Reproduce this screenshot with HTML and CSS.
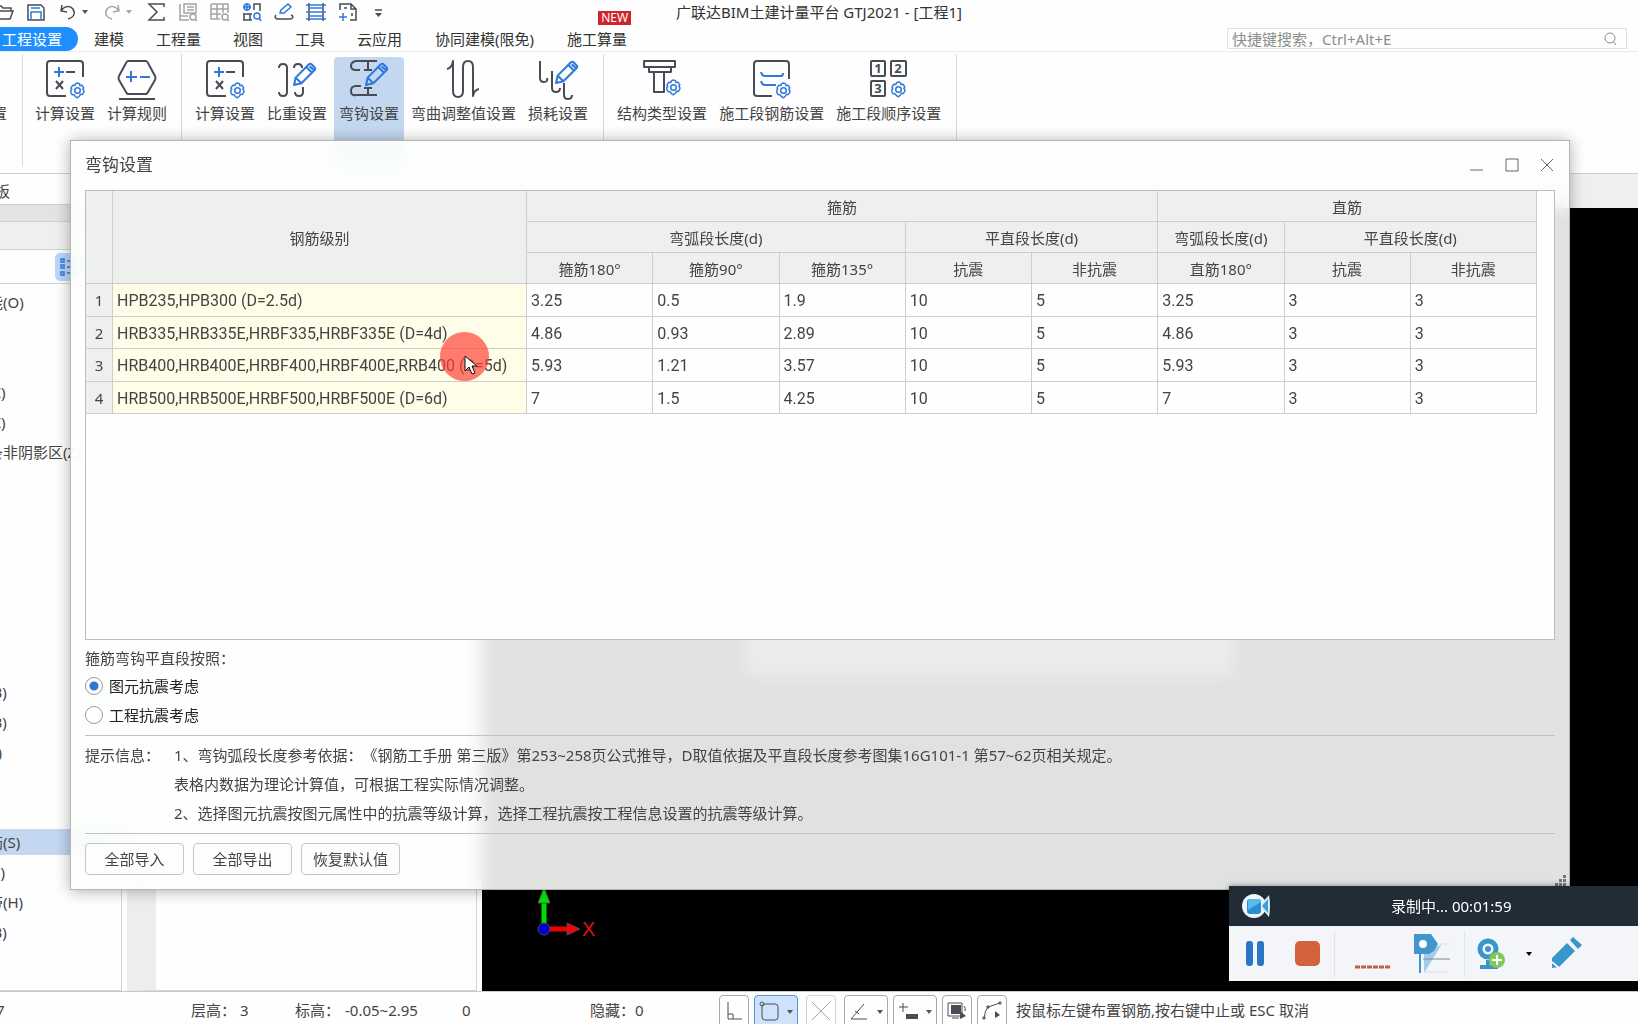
FILE: index.html
```html
<!DOCTYPE html>
<html lang="zh-CN">
<head>
<meta charset="utf-8">
<title>广联达BIM土建计量平台 GTJ2021 - [工程1]</title>
<link rel="stylesheet" href="styles.css">
</head>
<body>
<svg class="defs" aria-hidden="true">
  <symbol id="gear" viewBox="0 0 16 16"><path d="M6.3 1.5 8 1l1.700.5.6 1.700 1.900-.2 1.700 2.500-.9 1.500L14 8l-.1 1.800-1.300 1.900-1.900-.1-1 1.800L8 14.800l-2-1-1-1.800-1.900.1-1.300-1.900L1.700 8l.9-1-.7-1.500 1.700-2.500 1.900.2z"/><circle cx="8" cy="8" r="2.600"/></symbol>
  <symbol id="pencil" viewBox="0 0 24 24"><path d="M2 22 3.500 15 16 2.500q1.500-1.500 3 0l2.500 2.500q1.500 1.500 0 3L9 20.500zM14 5l5 5M17 4l4 4M3.500 15l5.500 5.500"/></symbol>
</svg>
<div class="app">
  <header class="titlebar">
    <nav class="quick" aria-label="快速访问">
      <button class="qbtn"><svg viewBox="0 0 20 20"><path d="M1 16V4h6l2 2h8v3M1 17h15l3-8H5l-3 8"/></svg></button>
      <button class="qbtn"><svg viewBox="0 0 20 20"><path d="M2 3h13l3 3v12H2z"/><path class="b" d="M5 18v-8h10v8M5 6h9"/></svg></button>
      <button class="qbtn split"><svg viewBox="0 0 20 20"><path d="M4 3 3 9l6 1M3 9c3-5 9-6 12-2 3 5 0 9-5 10"/></svg><i class="caret"></i></button>
      <button class="qbtn split off"><svg viewBox="0 0 20 20"><path d="m16 3 1 6-6 1M17 9C14 4 8 3 5 7c-3 5 0 9 5 10"/></svg><i class="caret"></i></button>
      <button class="qbtn"><svg viewBox="0 0 20 20"><path d="M18 5V2H3l8 8-8 8h15v-3"/></svg></button>
      <button class="qbtn off"><svg viewBox="0 0 20 20"><path d="M2 2v16h9M6 2h12v9H6zM9 5h7M9 8h7M2 14h8"/><circle cx="15" cy="15" r="3"/><path d="m17 17 2 2"/></svg></button>
      <button class="qbtn off"><svg viewBox="0 0 20 20"><path d="M1 2h17v9M1 2v15h9M1 7h17M1 12h10M7 2v15M13 2v9"/><circle cx="15" cy="15" r="3"/><path d="m17 17 2 2"/></svg></button>
      <button class="qbtn"><svg viewBox="0 0 20 20"><circle class="b" cx="5" cy="5" r="3"/><path class="b" d="M5 1v8M1 5h8"/><path d="M12 8V2h6v7M2 18v-6h6v6M1 12h9M1 18h9"/><circle class="b" cx="15" cy="14" r="3"/><path class="b" d="m17 16 2 3"/></svg></button>
      <button class="qbtn"><svg viewBox="0 0 20 20"><path class="b" d="m6 11 1-3 7-6 3 3-7 6z"/><path d="M2 13c-2 2 0 4 2 4h12c3 0 4-3 1-4"/></svg></button>
      <button class="qbtn"><svg viewBox="0 0 20 20"><path d="M3 1v18M17 1v18"/><path class="b" d="M0 3h20M0 10h20M0 17h20M3 6h14M3 14h14"/></svg></button>
      <button class="qbtn"><svg viewBox="0 0 20 20"><path d="M2 8V2h11l5 5v11h-6M13 2v5h5M6 6h3M14 11v3"/><path class="b" d="M1 15h8M5 11v8"/></svg></button>
      <button class="qbtn"><svg viewBox="0 0 20 20"><path d="M5 8h7"/><path class="fill" d="M5 11h7l-3.500 4z"/></svg></button>
    </nav>
    <h1 class="apptitle">广联达BIM土建计量平台 GTJ2021 - [工程1]</h1>
  </header>

  <div class="tabrow">
    <nav class="tabs">
      <a href="#" class="tab current">工程设置</a>
      <a href="#" class="tab">建模</a>
      <a href="#" class="tab">工程量</a>
      <a href="#" class="tab">视图</a>
      <a href="#" class="tab">工具</a>
      <a href="#" class="tab">云应用</a>
      <a href="#" class="tab long">协同建模(限免)</a>
      <a href="#" class="tab">施工算量<span class="new">NEW</span></a>
    </nav>
    <div class="search">
      <input type="text" aria-label="快捷键搜索" placeholder="快捷键搜索，Ctrl+Alt+E">
      <svg viewBox="0 0 16 16"><circle cx="8" cy="7" r="5"/><path d="m11 10 3 4"/></svg>
    </div>
  </div>

  <div class="ribbon">
    <div class="group cut"><button class="tool"><span>置</span></button></div>
    <div class="group">
      <button class="tool"><svg viewBox="0 0 38 38"><path d="M20 36H4q-3 0-3-3V4q0-3 3-3h30q3 0 3 3v13M20 12h9M10 21l7 8M17 21l-7 8"/><path class="b" d="M8 12h10M13 7v10"/><use class="g" href="#gear" x="23" y="22" width="17" height="17"/></svg><span>计算设置</span></button>
      <button class="tool"><svg viewBox="0 0 38 38"><path d="M10 1h18q1 0 2 2l7 13q1 2 0 4l-7 12q-1 2-2 2H10q-1 0-2-2L1 20q-1-2 0-4L8 3q1-2 2-2zM1 39h36"/><path class="b" d="M8 17h11M13 11v11M22 17h10"/></svg><span>计算规则</span></button>
    </div>
    <div class="group">
      <button class="tool"><svg viewBox="0 0 38 38"><path d="M20 36H4q-3 0-3-3V4q0-3 3-3h30q3 0 3 3v13M20 12h9M10 21l7 8M17 21l-7 8"/><path class="b" d="M8 12h10M13 7v10"/><use class="g" href="#gear" x="23" y="22" width="17" height="17"/></svg><span>计算设置</span></button>
      <button class="tool"><svg viewBox="0 0 38 38"><path d="M1 8q0-4 4-4t4 4v24q0 4-4 4t-4-4M16 8q0-4 4-4t4 4M25 27v5q0 4-4 4t-4-4"/><use class="b" href="#pencil" x="14" y="2" width="25" height="25"/></svg><span>比重设置</span></button>
      <button class="tool on"><svg viewBox="0 0 38 38"><path d="M10 10H6q-5 0-5-4t5-5h21M18 1v10M14 10h8M11 26H6q-5 0-5 5t5 4h21M18 28v6M14 28h8"/><use class="b" href="#pencil" x="14" y="2" width="25" height="25"/></svg><span>弯钩设置</span></button>
      <button class="tool"><svg viewBox="0 0 38 38"><path d="M2 9q5-1 6-8v30q0 6 5 6t5-6V7q0-6 5-6t5 6v29q1-6 6-7"/></svg><span>弯曲调整值设置</span></button>
      <button class="tool"><svg viewBox="0 0 38 38"><path d="M1 1v17q0 4 4 4t3-4M13 11v17q0 4 4 4t4-4M25 23v12q0 4 4 4t4-4"/><use class="b" href="#pencil" x="15" y="0" width="25" height="25"/></svg><span>损耗设置</span></button>
    </div>
    <div class="group">
      <button class="tool"><svg viewBox="0 0 38 38"><path d="M1 1h31v6h-4v5H6V7H1zM6 7h22M11 12v20h10V12"/><use class="g" href="#gear" x="22" y="19" width="17" height="17"/></svg><span>结构类型设置</span></button>
      <button class="tool"><svg viewBox="0 0 38 38"><path d="M19 36H4q-3 0-3-3V4q0-3 3-3h29q3 0 3 3v15"/><path class="b" d="M8 12q1 4 4 4h16q2 0 2-3M8 21q1 4 4 4h11"/><use class="g" href="#gear" x="22" y="22" width="17" height="17"/></svg><span>施工段钢筋设置</span></button>
      <button class="tool"><svg viewBox="0 0 38 38"><path d="M2 1h12q1 0 1 1v13q0 1-1 1H2q-1 0-1-1V2q0-1 1-1zM22 1h13q1 0 1 1v13q0 1-1 1H22q-1 0-1-1V2q0-1 1-1zM2 21h12q1 0 1 1v13q0 1-1 1H2q-1 0-1-1V22q0-1 1-1z"/><text x="8" y="13">1</text><text x="28" y="13">2</text><text x="8" y="33">3</text><use class="g" href="#gear" x="20" y="21" width="17" height="17"/></svg><span>施工段顺序设置</span></button>
    </div>
  </div>

  <main class="work">
    <aside class="side">
      <div class="floorbar"><span>板</span></div>
      <div class="band"></div>
      <div class="panels">
        <section class="nav">
          <div class="navhead"></div>
          <div class="navtools"><button class="listbtn" aria-label="列表"><svg viewBox="0 0 18 18"><path d="M1 1h3v3H1zM1 7h3v3H1zM1 14h3v3H1zM7 3h10M7 9h10M7 15h10"/></svg></button></div>
          <ul class="tree">
            <li>能(O)</li><li></li><li></li><li>(Z)</li><li>(Z)</li><li>条非阴影区(Z)</li>
            <li></li><li></li><li></li><li></li><li></li><li></li><li></li>
            <li>(B)</li><li>(B)</li><li>(I)</li><li></li><li></li>
            <li class="sel">筋(S)</li><li>(F)</li><li>带(H)</li><li>(B)</li>
          </ul>
        </section>
        <section class="props"></section>
      </div>
    </aside>
    <section class="view">
      <div class="viewbar"></div>
      <div class="canvas">
        <div class="model"></div>
        <svg class="axis" viewBox="0 0 64 64"><path d="M13 50V20" stroke="#0d0" stroke-width="5"/><path d="M7 22 13 6l6 16z" fill="#0e0"/><path d="M16 48h22" stroke="#e00" stroke-width="5"/><path d="m36 42 13 6-13 6z" fill="#f00"/><circle cx="13" cy="48" r="6" fill="#00c"/><text x="51" y="55">X</text></svg>
      </div>
    </section>
  </main>

  <footer class="status">
    <span class="s0">7</span><span class="s1">层高： 3</span><span class="s2">标高：</span><span class="s3">-0.05~2.95</span><span class="s4">0</span><span class="s5">隐藏：0</span>
    <div class="snaps">
      <button class="snap"><svg viewBox="0 0 20 20"><path d="M4 1v17h14M4 13h5v5"/></svg></button>
      <button class="snap wide on"><svg viewBox="0 0 20 20"><rect x="3" y="3" width="16" height="16" rx="3"/><circle cx="3" cy="3" r="2"/></svg><i class="caret"></i></button>
      <button class="snap x off"><svg viewBox="0 0 20 20"><path d="m1 1 18 18M19 1 1 19"/></svg></button>
      <button class="snap wide"><svg viewBox="0 0 20 20"><path d="M15 3 2 18h16M6 10l4 3"/></svg><i class="caret"></i></button>
      <button class="snap wide"><svg viewBox="0 0 20 20"><path d="M1 6h9M5 2v9"/><path class="fill" d="M8 13h12v5H8z"/></svg><i class="caret"></i></button>
      <button class="snap"><svg viewBox="0 0 20 20"><path class="fill" d="M4 4h10v9H4z"/><path d="M1 2h14v13H1zM5 17h7M17 5q2 2 1 5"/><path class="fill" d="m13 10 6 5-6 3z"/></svg></button>
      <button class="snap"><svg viewBox="0 0 20 20"><path d="M2 17q1-8 4-11l12-4M1 16h2v2H1zM5 5h2v2H5zM17 1h2v2h-2z"/><path class="fill" d="m13 10 5 4-5 3z"/></svg></button>
    </div>
    <span class="hint">按鼠标左键布置钢筋,按右键中止或 ESC 取消</span>
  </footer>
</div>

<section class="dialog" role="dialog" aria-labelledby="dlg-title">
  <header class="dlghead">
    <h2 id="dlg-title">弯钩设置</h2>
    <div class="winbtns">
      <button aria-label="最小化"><svg viewBox="0 0 14 14"><path d="M0 12h13"/></svg></button>
      <button aria-label="最大化"><svg viewBox="0 0 14 14"><path d="M1 1h12v12H1z"/></svg></button>
      <button aria-label="关闭"><svg viewBox="0 0 14 14"><path d="m1 1 12 12M13 1 1 13"/></svg></button>
    </div>
  </header>
  <div class="frame">
    <table>
      <colgroup><col class="cnum"><col class="cname"><col><col><col><col><col><col><col><col></colgroup>
      <thead>
        <tr><th rowspan="3"></th><th rowspan="3">钢筋级别</th><th colspan="5">箍筋</th><th colspan="3">直筋</th></tr>
        <tr><th colspan="3">弯弧段长度(d)</th><th colspan="2">平直段长度(d)</th><th>弯弧段长度(d)</th><th colspan="2">平直段长度(d)</th></tr>
        <tr><th>箍筋180°</th><th>箍筋90°</th><th>箍筋135°</th><th>抗震</th><th>非抗震</th><th>直筋180°</th><th>抗震</th><th>非抗震</th></tr>
      </thead>
      <tbody>
        <tr><th>1</th><td class="name">HPB235,HPB300 (D=2.5d)</td><td>3.25</td><td>0.5</td><td>1.9</td><td>10</td><td>5</td><td>3.25</td><td>3</td><td>3</td></tr>
        <tr><th>2</th><td class="name">HRB335,HRB335E,HRBF335,HRBF335E (D=4d)</td><td>4.86</td><td>0.93</td><td>2.89</td><td>10</td><td>5</td><td>4.86</td><td>3</td><td>3</td></tr>
        <tr><th>3</th><td class="name">HRB400,HRB400E,HRBF400,HRBF400E,RRB400 (D=5d)</td><td>5.93</td><td>1.21</td><td>3.57</td><td>10</td><td>5</td><td>5.93</td><td>3</td><td>3</td></tr>
        <tr><th>4</th><td class="name">HRB500,HRB500E,HRBF500,HRBF500E (D=6d)</td><td>7</td><td>1.5</td><td>4.25</td><td>10</td><td>5</td><td>7</td><td>3</td><td>3</td></tr>
      </tbody>
    </table>
  </div>
  <fieldset class="choice">
    <legend>箍筋弯钩平直段按照：</legend>
    <label><input type="radio" name="basis" checked>图元抗震考虑</label>
    <label><input type="radio" name="basis">工程抗震考虑</label>
  </fieldset>
  <div class="tips">
    <span class="tiplabel">提示信息：</span>
    <p>1、弯钩弧段长度参考依据：《钢筋工手册 第三版》第253~258页公式推导，D取值依据及平直段长度参考图集16G101-1 第57~62页相关规定。<br>表格内数据为理论计算值，可根据工程实际情况调整。<br>2、选择图元抗震按图元属性中的抗震等级计算，选择工程抗震按工程信息设置的抗震等级计算。</p>
  </div>
  <div class="actions"><button>全部导入</button><button>全部导出</button><button>恢复默认值</button></div>
  <svg class="grip" viewBox="0 0 12 12"><path d="M8 0h3v3H8zM8 4h3v3H8zM8 8h3v3H8zM4 4h3v3H4zM4 8h3v3H4zM0 8h3v3H0z"/></svg>
</section>

<section class="recorder">
  <header class="rechead">
    <svg viewBox="0 0 30 26"><circle cx="13" cy="13" r="12" fill="#f1f5fa"/><path d="m21 10 7-8q2 11 0 22l-7-8z" fill="#d8ecf8"/><rect x="6" y="6" width="14" height="15" rx="3" fill="#2a8fd0"/><path d="M8 6h9q3 0 3 3L7 17V8z" fill="#55bdea"/><path d="m21 13 6-7v14z" fill="#3aa0d8"/></svg>
    <span>录制中... 00:01:59</span>
  </header>
  <div class="recbody">
    <button aria-label="暂停"><svg viewBox="0 0 40 40"><rect x="11" y="7" width="7" height="25" rx="3" fill="#2a76c4"/><rect x="22" y="7" width="7" height="25" rx="3" fill="#2a76c4"/></svg></button>
    <button aria-label="停止"><svg viewBox="0 0 40 40"><rect x="8" y="7" width="25" height="25" rx="5" fill="#d4633c"/></svg></button>
    <hr>
    <button aria-label="音量"><svg viewBox="0 0 40 40"><path d="M2 33h35" stroke="#bd6148" stroke-width="3" stroke-dasharray="5 1"/></svg></button>
    <button class="flag" aria-label="标记"><svg viewBox="0 0 40 40"><path d="M13 20 31 10 13 39z" fill="#a4cce6"/><path d="M3 0h17l7 10-4 7-5 3H3z" fill="#4197ca"/><circle cx="12" cy="10" r="4" fill="#fff"/><path d="M9 19v20" stroke="#4197ca" stroke-width="2"/><path d="M12 25h27" stroke="#789" /><path d="M29 10h10M15 38h22" stroke="#ddd"/></svg></button>
    <hr>
    <button aria-label="摄像头"><svg viewBox="0 0 40 40"><circle cx="16" cy="15" r="8" fill="none" stroke="#3a95cb" stroke-width="5"/><circle cx="16" cy="15" r="3" fill="#3a95cb"/><path d="M8 33h18M16 26v7" stroke="#3a95cb" stroke-width="4"/><circle cx="25" cy="26" r="8" fill="#80c858"/><path d="M20 26h10M25 21v10" stroke="#fff" stroke-width="2"/></svg></button>
    <i class="caret"></i>
    <button aria-label="画笔"><svg viewBox="0 0 40 40"><path d="M6 34V24L21 9l8 8-16 16zM24 6l3-3 9 8-4 4z" fill="#3a95cb"/><path d="m6 28 7 6" stroke="#f3f5f8" stroke-width="2"/></svg></button>
  </div>
</section>

<div class="pointer"><svg viewBox="0 0 14 20"><path d="M1 1v15l4-4 3 7 3-1-3-7h5z"/></svg></div>
</body>
</html>
```

FILE: styles.css
```css
* { box-sizing: border-box; }
body, h1, h2, p, ul, fieldset, legend { margin: 0; padding: 0; border: 0; font-weight: 400; }
body { height: 100vh; overflow: hidden; position: relative; background: #fdfefd; color: #444; font: 15px/20px "Noto Sans", "Noto Sans CJK SC", sans-serif; white-space: nowrap; text-spacing-trim: space-all; }
button, input { font: inherit; color: inherit; padding: 0; border: 0; background: none; }
svg { display: block; fill: none; stroke: #4a4c55; }
.defs { position: absolute; width: 0; height: 0; }
.fill { fill: #4a4c55; stroke: none; }
.b, .g { stroke: #2f78dc; }
.caret { width: 0; height: 0; border: 3px solid transparent; border-top: 4px solid #555; border-bottom: 0; }

.app { height: 100%; display: flex; flex-direction: column; }

/* title bar */
.titlebar { height: 26px; padding-bottom: 2px; display: grid; grid-template-columns: 1fr auto 1fr; align-items: center; }
.quick { display: flex; gap: 12px; margin-left: -6px; }
.qbtn { width: 20px; flex: none; display: flex; align-items: center; gap: 4px; }
.qbtn svg { width: 20px; height: 20px; flex: none; stroke-width: 1.5; }
.qbtn.split { width: 32px; }
.off { opacity: .5; }
.apptitle { font-size: 15px; color: #333; }

/* tabs and search */
.tabrow { height: 26px; display: flex; justify-content: space-between; align-items: center; border-bottom: 1px solid #eceeec; }
.tabs { display: flex; margin-left: -14px; }
.tab { position: relative; height: 24px; line-height: 24px; padding: 0 16px; color: #333; text-decoration: none; }
.tab.current { background: #1e8fff; color: #fff; border-radius: 12px; }
.tab.long { padding: 0 17px; }
.new { position: absolute; left: 47px; top: -16px; width: 33px; height: 14px; background: #d0242c; color: #fff; font-size: 12px; line-height: 14px; text-align: center; }
.search { width: 400px; height: 21px; margin-right: 11px; display: flex; align-items: center; border: 1px solid #e0e2e0; }
.search input { flex: 1; height: 18px; padding-left: 4px; outline: 0; }
.search input::placeholder { color: #8c8e8c; opacity: 1; }
.search svg { width: 16px; height: 16px; margin-right: 8px; stroke: #8c8e8c; }

/* ribbon */
.ribbon { height: 122px; display: flex; padding: 2px 0 6px; border-bottom: 1px solid #cfd1cf; background: #fdfefd; }
.group { display: flex; padding: 0 9px 0 7px; border-right: 1px solid #d8dad8; }
.group:nth-child(2) { padding: 0 8px 0 6px; }
.group.cut { width: 23px; padding: 0 15px 0 0; justify-content: flex-end; }
.group.cut .tool { padding: 46px 0 0; margin: 3px 0 0; }
.tool { display: flex; flex-direction: column; align-items: center; justify-content: flex-start; gap: 5px; padding: 3px 5px 0; margin: 3px 1px 0; border-radius: 4px 4px 0 0; }
.tool.on { background: #c3d7f1; }
.tool svg { width: 38px; height: 38px; overflow: visible; stroke-width: 2; stroke-linejoin: round; }
.tool .g { stroke-width: 1.4; }
.tool text { font: 700 13px "Noto Sans", sans-serif; text-anchor: middle; fill: #4a4c55; stroke: none; }

/* workspace */
.work { flex: 1; min-height: 0; display: flex; }
.side { width: 482px; flex: none; display: flex; flex-direction: column; overflow: hidden; }
.floorbar { height: 31px; line-height: 34px; border-bottom: 1px solid #cfd1cf; }
.floorbar span { margin-left: -5px; }
.band { height: 17px; background: #e2e4e2; border-bottom: 1px solid #d0d2d0; }
.panels { flex: 1; min-height: 0; display: flex; gap: 5px; padding-right: 5px; background: #fdfefd; }
.nav { width: 122px; overflow: hidden; border: solid #d3d5d3; border-width: 0 1px 1px 0; }
.navhead { height: 28px; background: #eef0ee; border-bottom: 1px solid #d0d2d0; }
.navtools { height: 34px; padding: 3px 0 0 55px; border-bottom: 1px solid #d0d2d0; }
.listbtn { width: 28px; height: 28px; display: grid; place-items: center; background: #bcd6f8; border-radius: 5px; }
.listbtn svg { width: 18px; height: 18px; stroke: #2f78dc; stroke-width: 1.5; }
.tree { list-style: none; padding-top: 3px; }
.tree li { height: 30px; line-height: 30px; text-indent: -12px; }
.tree .sel { height: 26px; line-height: 26px; margin: 2px 0; background: #c3d7f1; }
.props { flex: 1; border: 1px solid #d3d5d3; border-left: 29px solid #eceeec; }
.view { flex: 1; display: flex; flex-direction: column; }
.viewbar { height: 34px; background: #eef0ee; }
.canvas { flex: 1; position: relative; background: #000; }
.model { position: absolute; left: 262px; bottom: 314px; width: 490px; height: 120px; background: #5c625c; }
.axis { position: absolute; left: 49px; bottom: 46px; width: 64px; height: 64px; }
.axis text { font: 20px "Liberation Sans", sans-serif; fill: #e01010; stroke: none; }

/* status bar */
.status { height: 33px; display: flex; align-items: flex-start; border-top: 1px solid #c8cac8; padding-top: 3px; overflow: hidden; line-height: 30px; }
.status > span { flex: none; }
.s0 { width: 191px; text-indent: -4px; }
.s1 { width: 104px; }
.s2 { width: 50px; }
.s3 { width: 117px; }
.s4 { width: 128px; }
.s5 { width: 129px; }
.snaps { display: flex; gap: 5px; }
.snap { width: 30px; height: 34px; display: flex; align-items: flex-start; justify-content: space-between; padding: 5px 4px; border: 1px solid #a8aaa8; border-radius: 4px; }
.snap.wide { width: 44px; }
.snap.x { margin: 0 3px; }
.snap svg { width: 20px; height: 20px; overflow: visible; }
.snap .caret { margin-top: 9px; }
.snap.on { background: #cfe2fb; border-color: #5b94dc; }
.hint { margin-left: 9px; }

/* hook settings dialog */
.dialog { position: absolute; left: 70px; right: 68px; top: 140px; height: 750px; padding: 0 14px; border: 1px solid #b4b6b4; background: rgba(253,255,252,.885); -webkit-backdrop-filter: blur(9px); backdrop-filter: blur(9px); box-shadow: 0 1px 14px rgba(0,0,0,.32); }
.dlghead { height: 49px; padding-bottom: 2px; display: flex; justify-content: space-between; align-items: center; }
h2 { font-size: 17px; color: #444; }
.winbtns { display: flex; gap: 21px; padding-right: 1px; }
.winbtns svg { width: 14px; height: 14px; stroke: #666; }
.frame { height: 450px; padding-right: 17px; border: 1px solid #bcbebc; background: #fdfefd; }
table { width: 100%; table-layout: fixed; border-collapse: separate; border-spacing: 0; }
.cnum { width: 27px; }
.cname { width: 414px; }
th, td { height: 31px; padding: 0; border: solid #cdcfcd; border-width: 0 1px 1px 0; }
th { background: #eef0ee; font-weight: 400; }
thead th { padding-top: 1px; }
tbody tr { height: 33px; }
tbody tr:nth-child(even) { height: 32px; }
td { padding: 2px 0 0 4px; text-align: left; font-family: Roboto, sans-serif; font-size: 16px; }
.name { background: #fffde8; }
.choice { padding-top: 8px; }
.choice legend { float: left; width: 100%; margin-bottom: 3px; }
.choice label { clear: both; display: flex; align-items: center; gap: 5px; height: 29px; color: #222; }
.choice input { appearance: none; width: 18px; height: 18px; margin: 0 1px 0 0; border: 1px solid #9a9c9a; border-radius: 50%; background: #fff; }
.choice input:checked { background: radial-gradient(circle, #2f78d0 0 4px, #fff 5px); }
.tips { display: flex; margin-top: 6px; padding: 5px 0; border: solid #c0c2c0; border-width: 1px 0; line-height: 29px; }
.tiplabel { width: 89px; }
.actions { display: flex; gap: 9px; padding-top: 9px; }
.actions button { width: 99px; height: 32px; border: 1px solid #c4c6c4; border-radius: 4px; background: #fdfdfd; }
.grip { position: absolute; right: 2px; bottom: 2px; width: 12px; height: 12px; fill: #777; stroke: none; }

/* screen recorder */
.recorder { position: absolute; right: 0; bottom: 43px; width: 409px; background: #f3f5f8; box-shadow: 0 0 6px rgba(0,0,0,.4); }
.rechead { height: 40px; display: flex; align-items: center; background: #222c36; color: #fff; }
.rechead svg { width: 30px; height: 26px; margin: 0 120px 0 12px; stroke: none; }
.recbody { height: 55px; display: flex; align-items: center; padding-left: 6px; }
.recbody svg { width: 40px; height: 40px; stroke: none; }
.recbody button + button { margin-left: 12px; }
.recbody .flag { margin-left: 18px; }
.recbody button + .flag { margin-left: 18px; }
.recbody hr { width: 1px; height: 46px; margin: 0 18px 0 7px; border: 0; background: #dfe2e6; }
.recbody hr ~ hr { margin: 0 7px 0 13px; }
.recbody .caret { margin: 0 14px 0 14px; border-top-color: #000; }

/* highlighted mouse pointer */
.pointer { position: absolute; left: 440px; top: 332px; width: 49px; height: 49px; border-radius: 50%; background: rgba(255,60,50,.68); }
.pointer svg { width: 14px; height: 20px; margin: 23px 0 0 24px; fill: #fff; stroke: #111; }
```
